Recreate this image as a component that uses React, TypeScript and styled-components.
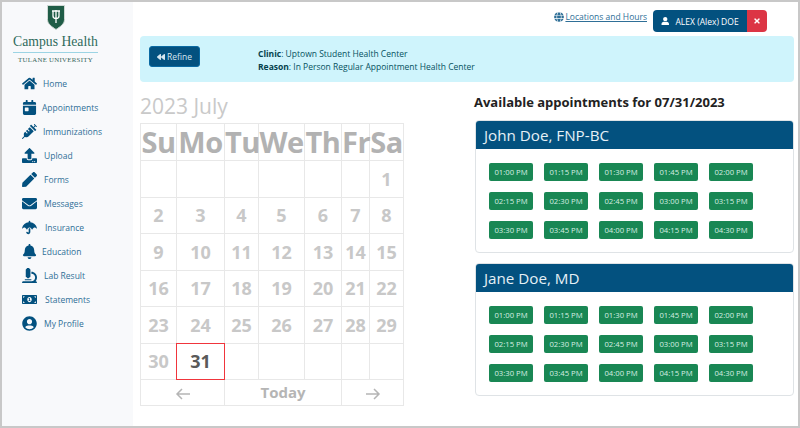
import React from 'react';
import styled, { createGlobalStyle } from 'styled-components';
import {
  FaHome,
  FaCalendarDay,
  FaSyringe,
  FaUpload,
  FaPen,
  FaEnvelope,
  FaUmbrella,
  FaBell,
  FaMicroscope,
  FaMoneyBillAlt,
  FaUserCircle,
  FaUser,
  FaGlobe,
  FaBackward,
  FaTimes,
} from 'react-icons/fa';

const GlobalStyle = createGlobalStyle`
  html, body {
    margin: 0;
    padding: 0;
    background: #fff;
  }
  body {
    font-family: "Open Sans", "Noto Sans", sans-serif;
  }
`;

const Frame = styled.div`
  width: 800px;
  height: 428px;
  box-sizing: border-box;
  border: 2px solid #c8c8c8;
  display: flex;
  overflow: hidden;
  background: #fff;
`;

const Sidebar = styled.aside`
  width: 131px;
  flex: none;
  background: #f8f9fb;
  display: flex;
  flex-direction: column;
`;

const Logo = styled.div`
  display: flex;
  flex-direction: column;
  align-items: center;
  width: 85px;
  margin: 3px 0 0 11px;
`;

const CampusName = styled.div`
  font-family: "Liberation Serif", serif;
  font-size: 13.7px;
  line-height: 17px;
  width: 100%;
  text-align: center;
  color: #2f6b5b;
  white-space: nowrap;
  border-bottom: 1px solid #9cd4e4;
  padding-bottom: 2px;
  margin-top: 3px;
`;

const University = styled.div`
  font-family: "Liberation Serif", serif;
  font-size: 6.8px;
  line-height: 9px;
  letter-spacing: 0.3px;
  color: #37665a;
  margin-top: 2px;
  white-space: nowrap;
`;

const Nav = styled.nav`
  display: flex;
  flex-direction: column;
  margin-top: 7px;
  padding-left: 20px;
`;

const NavItem = styled.a`
  height: 24px;
  display: flex;
  align-items: center;
  color: #2f6f97;
  font-size: 8.5px;
  white-space: nowrap;
`;

const NavIcon = styled.span<{ $w: number }>`
  width: ${(p) => p.$w}px;
  flex: none;
  display: flex;
  align-items: center;
  color: #03517f;
  font-size: 15px;
`;

const Main = styled.main`
  flex: 1;
  min-width: 0;
  display: flex;
  flex-direction: column;
  padding: 8px 4px 0 7px;
`;

const TopBar = styled.div`
  display: flex;
  justify-content: flex-end;
  align-items: flex-start;
  gap: 6px;
  padding-right: 27px;
  height: 26px;
`;

const LocationLink = styled.a`
  display: flex;
  align-items: center;
  gap: 1px;
  font-size: 8.5px;
  line-height: 14px;
  color: #2f6f97;
  text-decoration: underline;
  svg {
    color: #2f6f97;
    font-size: 10px;
  }
`;

const UserGroup = styled.div`
  display: flex;
  height: 22px;
  border-radius: 4px;
  overflow: hidden;
  font-size: 8.5px;
`;

const UserName = styled.div`
  width: 94px;
  background: #03517f;
  color: #fff;
  display: flex;
  align-items: center;
  gap: 6px;
  padding-left: 8px;
  box-sizing: border-box;
  white-space: nowrap;
`;

const CloseBox = styled.div`
  width: 20px;
  background: #dc3545;
  color: #fff;
  font-size: 8px;
  display: flex;
  align-items: center;
  justify-content: center;
`;

const InfoBar = styled.div`
  height: 46px;
  background: #cff4fc;
  border-radius: 4px;
  display: flex;
  align-items: center;
  padding-left: 9px;
  color: #055160;
`;

const RefineButton = styled.button`
  width: 51px;
  height: 21px;
  background: #03517f;
  border: 1px solid #0a6aa3;
  border-radius: 3px;
  color: #d5e6f0;
  font-family: inherit;
  font-size: 8.5px;
  padding: 0;
  display: flex;
  align-items: center;
  justify-content: center;
  gap: 2px;
  margin-top: -5px;
  svg {
    font-size: 8px;
  }
`;

const InfoText = styled.div`
  margin: 2px 0 0 58px;
  font-size: 8.5px;
  line-height: 13px;
  b {
    font-weight: 700;
    color: #04414d;
  }
`;

const Content = styled.div`
  display: flex;
  flex: 1;
`;

const CalendarCol = styled.section`
  width: 263px;
  flex: none;
  padding-top: 10px;
`;

const MonthTitle = styled.div`
  font-size: 21px;
  line-height: 29px;
  color: #c9c9c9;
`;

const CalTable = styled.table`
  border-collapse: collapse;
  table-layout: fixed;
  width: 263px;
  margin-top: 2px;
`;

const HeadCell = styled.th`
  border: 1px solid #e8e8e8;
  height: 36px;
  padding: 0;
  font-size: 29px;
  line-height: 36px;
  font-weight: 700;
  letter-spacing: -0.5px;
  color: #b2b2b2;
  text-align: center;
  white-space: nowrap;
  overflow: visible;
`;

const DayCell = styled.td<{ $selected?: boolean }>`
  border: 1px solid #e8e8e8;
  height: 35.5px;
  padding: 0;
  font-size: 18px;
  line-height: 24px;
  font-weight: 700;
  text-align: center;
  color: ${(p) => (p.$selected ? '#5a5a5a' : '#c8c8c8')};
  position: ${(p) => (p.$selected ? 'relative' : 'static')};
`;

const SelectedFrame = styled.span`
  position: absolute;
  inset: -1px;
  box-shadow: inset 0 0 0 1px #f0353c;
`;

const FootCell = styled.td`
  border: 1px solid #e8e8e8;
  height: 26px;
  padding: 0 0 2px;
  box-sizing: border-box;
  text-align: center;
  font-size: 15px;
  line-height: 20px;
  font-weight: 700;
  color: #b5b5b5;
`;

const Arrow = styled.svg`
  display: block;
  margin: 5px auto 0;
`;

const AppointmentsCol = styled.section`
  flex: 1;
  margin-left: 71px;
  min-width: 0;
  padding-top: 11px;
`;

const AppointmentsTitle = styled.h2`
  margin: 0;
  font-size: 13px;
  line-height: 18px;
  font-weight: 700;
  color: #222;
  white-space: nowrap;
`;

const ProviderCard = styled.div`
  width: 319px;
  box-sizing: border-box;
  margin: 9px 0 0 1px;
  border: 1px solid #dfe3e6;
  border-radius: 4px;
  overflow: hidden;
  & + & {
    margin-top: 10px;
  }
`;

const ProviderName = styled.div`
  height: 28px;
  background: #03517f;
  color: #e6f0f6;
  font-size: 15.2px;
  line-height: 28px;
  padding-left: 8px;
`;

const SlotGrid = styled.div`
  display: grid;
  grid-template-columns: repeat(5, 44px);
  column-gap: 11px;
  row-gap: 11px;
  padding: 14px 13px 13px;
`;

const Slot = styled.button`
  height: 18px;
  padding: 0;
  border: none;
  border-radius: 2px;
  background: #198754;
  color: #d6eee2;
  font-family: inherit;
  font-size: 7.7px;
`;

const WEEKS: (number | null)[][] = [
  [null, null, null, null, null, null, 1],
  [2, 3, 4, 5, 6, 7, 8],
  [9, 10, 11, 12, 13, 14, 15],
  [16, 17, 18, 19, 20, 21, 22],
  [23, 24, 25, 26, 27, 28, 29],
  [30, 31, null, null, null, null, null],
];

const DAYS = ['Su', 'Mo', 'Tu', 'We', 'Th', 'Fr', 'Sa'];
const COL_WIDTHS = [36, 48, 34, 46, 37, 28, 34];

const NAV_ITEMS = [
  { label: 'Home', icon: <FaHome />, w: 21 },
  { label: 'Appointments', icon: <FaCalendarDay />, w: 20 },
  { label: 'Immunizations', icon: <FaSyringe />, w: 21 },
  { label: 'Upload', icon: <FaUpload />, w: 22 },
  { label: 'Forms', icon: <FaPen />, w: 22 },
  { label: 'Messages', icon: <FaEnvelope />, w: 22 },
  { label: 'Insurance', icon: <FaUmbrella />, w: 23 },
  { label: 'Education', icon: <FaBell />, w: 20 },
  { label: 'Lab Result', icon: <FaMicroscope />, w: 22 },
  { label: 'Statements', icon: <FaMoneyBillAlt />, w: 23 },
  { label: 'My Profile', icon: <FaUserCircle />, w: 22 },
];

const SLOTS = [
  '01:00 PM', '01:15 PM', '01:30 PM', '01:45 PM', '02:00 PM',
  '02:15 PM', '02:30 PM', '02:45 PM', '03:00 PM', '03:15 PM',
  '03:30 PM', '03:45 PM', '04:00 PM', '04:15 PM', '04:30 PM',
];

const Shield = () => (
  <svg width="18" height="25" viewBox="0 0 18 25">
    <path d="M.5.5h17v14c0 4.500-4 7-8.500 10C4.500 21.500.5 19 .5 14.500z" fill="#1f5c46" stroke="#cfd8d4" strokeWidth="1" />
    <path d="M5 6h8M9 5v13M6 6v5c0 1.800 1.400 2.500 3 2.500s3-.7 3-2.500V6" fill="none" stroke="#fff" strokeWidth="1.300" />
  </svg>
);

const LeftArrow = () => (
  <Arrow width="16" height="12" viewBox="0 0 16 12">
    <path d="M15 6H2M7 1L2 6l5 5" fill="none" stroke="#b5b5b5" strokeWidth="1.500" />
  </Arrow>
);

const RightArrow = () => (
  <Arrow width="16" height="12" viewBox="0 0 16 12">
    <path d="M1 6h13M9 1l5 5-5 5" fill="none" stroke="#b5b5b5" strokeWidth="1.500" />
  </Arrow>
);

const App = () => (
  <Frame>
    <GlobalStyle />
    <Sidebar>
      <Logo>
        <Shield />
        <CampusName>Campus Health</CampusName>
        <University>TULANE UNIVERSITY</University>
      </Logo>
      <Nav>
        {NAV_ITEMS.map((item) => (
          <NavItem key={item.label}>
            <NavIcon $w={item.w}>{item.icon}</NavIcon>
            {item.label}
          </NavItem>
        ))}
      </Nav>
    </Sidebar>
    <Main>
      <TopBar>
        <LocationLink>
          <FaGlobe /> Locations and Hours
        </LocationLink>
        <UserGroup>
          <UserName>
            <FaUser /> ALEX (Alex) DOE
          </UserName>
          <CloseBox>
            <FaTimes />
          </CloseBox>
        </UserGroup>
      </TopBar>
      <InfoBar>
        <RefineButton>
          <FaBackward /> Refine
        </RefineButton>
        <InfoText>
          <div>
            <b>Clinic</b>: Uptown Student Health Center
          </div>
          <div>
            <b>Reason</b>: In Person Regular Appointment Health Center
          </div>
        </InfoText>
      </InfoBar>
      <Content>
        <CalendarCol>
          <MonthTitle>2023 July</MonthTitle>
          <CalTable>
            <colgroup>
              {COL_WIDTHS.map((w, i) => (
                <col key={i} style={{ width: w }} />
              ))}
            </colgroup>
            <thead>
              <tr>
                {DAYS.map((d) => (
                  <HeadCell key={d}>{d}</HeadCell>
                ))}
              </tr>
            </thead>
            <tbody>
              {WEEKS.map((week, i) => (
                <tr key={i}>
                  {week.map((d, j) => (
                    <DayCell key={j} $selected={d === 31}>
                      {d}
                      {d === 31 && <SelectedFrame />}
                    </DayCell>
                  ))}
                </tr>
              ))}
              <tr>
                <FootCell colSpan={2}>
                  <LeftArrow />
                </FootCell>
                <FootCell colSpan={3}>Today</FootCell>
                <FootCell colSpan={2}>
                  <RightArrow />
                </FootCell>
              </tr>
            </tbody>
          </CalTable>
        </CalendarCol>
        <AppointmentsCol>
          <AppointmentsTitle>Available appointments for 07/31/2023</AppointmentsTitle>
          {['John Doe, FNP-BC', 'Jane Doe, MD'].map((name) => (
            <ProviderCard key={name}>
              <ProviderName>{name}</ProviderName>
              <SlotGrid>
                {SLOTS.map((s) => (
                  <Slot key={s}>{s}</Slot>
                ))}
              </SlotGrid>
            </ProviderCard>
          ))}
        </AppointmentsCol>
      </Content>
    </Main>
  </Frame>
);

export default App;
